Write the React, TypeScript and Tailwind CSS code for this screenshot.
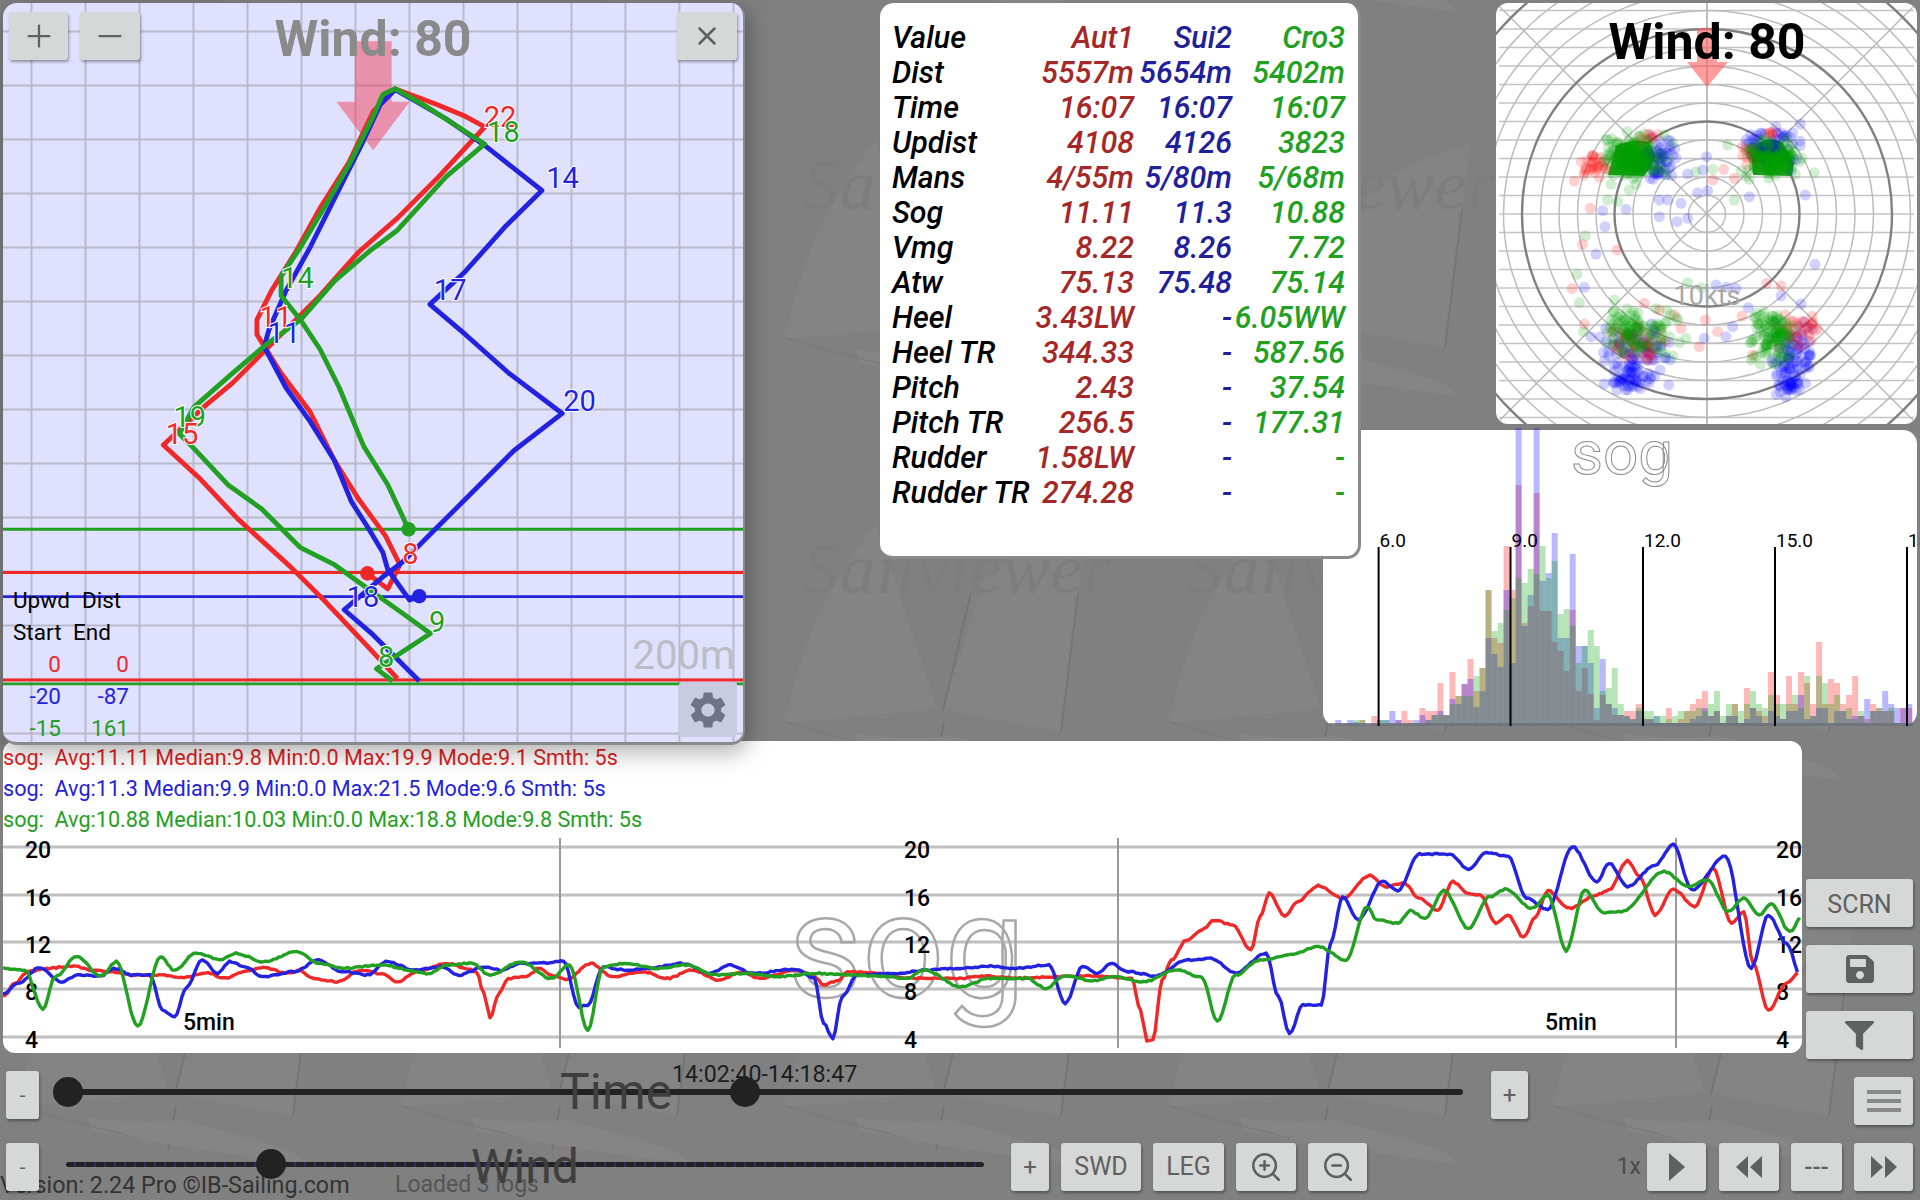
import type { ReactNode } from "react";
import { Minus, Plus, X, ZoomIn, ZoomOut } from "lucide-react";
import { FaFilter, FaSave } from "react-icons/fa";
import { MdSettings } from "react-icons/md";

const RED = "#f02828";
const BLUE = "#2222e0";
const GREEN = "#22a022";

let seed = 4711;
const rnd = () => {
  seed = (seed * 16807) % 2147483647;
  return seed / 2147483647;
};

const MAP_GRID = Array.from({ length: 14 }, (_, i) => 65 + i * 111.4);

const MAP_TRACKS = [
  {
    color: RED,
    y: [1181, 1403],
    dot: [758, 1183],
    pts: "758,1183 800,1215 825,1165 795,1105 740,1030 690,950 640,850 580,770 530,690 530,660 560,600 610,520 660,430 720,335 770,230 815,183 900,215 960,240 1000,262 900,370 820,450 740,520 660,610 545,725 480,790 420,840 337,918 410,985 490,1070 600,1170 670,1240 755,1330 820,1400",
  },
  {
    color: BLUE,
    y: [1231],
    dot: [865, 1230],
    pts: "865,1230 845,1238 800,1175 790,1140 760,1090 725,1035 690,950 640,870 590,800 545,715 555,680 590,600 640,510 700,390 750,290 785,215 815,185 860,210 920,245 1000,300 1118,393 1040,470 960,560 887,628 960,690 1050,770 1160,853 1060,930 960,1030 900,1090 830,1160 790,1190 710,1258 770,1310 820,1360 865,1405",
  },
  {
    color: GREEN,
    y: [1092, 1411],
    dot: [843, 1092],
    pts: "843,1092 800,1000 750,920 700,800 660,720 620,660 580,610 580,570 620,510 680,410 720,340 770,240 790,195 815,183 880,220 1000,297 920,365 820,475 760,520 690,580 620,660 550,710 480,770 400,840 370,895 400,925 470,1000 540,1050 620,1130 690,1165 760,1215 830,1265 888,1307 810,1358 777,1380 810,1405",
  },
];

const MAP_LABELS: [string, string, number, number][] = [
  ["22", RED, 998, 262],
  ["18", GREEN, 1005, 292],
  ["14", BLUE, 1127, 388],
  ["14", GREEN, 580, 595],
  ["17", BLUE, 895, 620],
  ["11", RED, 535, 675],
  ["11", BLUE, 552, 708],
  ["19", GREEN, 358, 882],
  ["15", RED, 342, 917],
  ["20", BLUE, 1162, 848],
  ["8", RED, 830, 1163],
  ["18", BLUE, 715, 1252],
  ["9", GREEN, 885, 1303],
  ["8", GREEN, 780, 1377],
];

const TABLE: [string, string, string, string][] = [
  ["Value", "Aut1", "Sui2", "Cro3"],
  ["Dist", "5557m", "5654m", "5402m"],
  ["Time", "16:07", "16:07", "16:07"],
  ["Updist", "4108", "4126", "3823"],
  ["Mans", "4/55m", "5/80m", "5/68m"],
  ["Sog", "11.11", "11.3", "10.88"],
  ["Vmg", "8.22", "8.26", "7.72"],
  ["Atw", "75.13", "75.48", "75.14"],
  ["Heel", "3.43LW", "-", "6.05WW"],
  ["Heel TR", "344.33", "-", "587.56"],
  ["Pitch", "2.43", "-", "37.54"],
  ["Pitch TR", "256.5", "-", "177.31"],
  ["Rudder", "1.58LW", "-", "-"],
  ["Rudder TR", "274.28", "-", "-"],
];

// r, g, b bar heights per 6px bin, read off the reference
const HIST = [
  [2,2,6],[3,1,2],[2,3,6],[2,6,4],[6,6,1],[1,1,2],[10,2,2],[2,6,6],[1,6,6],[2,2,15],[6,2,6],[15,2,2],
  [6,2,3],[2,3,6],[18,2,11],[15,6,6],[15,11,11],[43,11,15],[11,11,11],[54,22,27],[30,30,22],[42,30,42],
  [67,30,47],[35,50,19],[58,58,35],[136,136,88],[88,95,72],[83,103,59],[180,116,136],[136,128,63],
  [241,148,298],[103,143,100],[120,157,131],[233,152,298],[115,180,145],[115,148,153],[84,165,193],
  [75,112,88],[55,117,88],[116,100,172],[35,63,80],[58,80,80],[32,96,63],[6,80,18],[31,35,67],[22,38,22],
  [11,58,18],[11,22,11],[15,10,10],[15,7,7],[22,18,15],[7,15,7],[7,15,7],[3,10,10],[3,10,3],[18,7,3],
  [3,10,3],[7,15,3],[15,15,3],[22,15,7],[27,18,10],[35,15,18],[10,22,10],[15,35,15],[3,10,3],[10,22,10],
  [22,22,10],[3,15,3],[38,22,7],[18,35,18],[15,22,10],[10,18,3],[54,31,15],[31,22,10],[7,22,7],[50,22,15],
  [22,31,15],[54,18,31],[43,50,7],[22,10,10],[84,50,18],[22,43,18],[47,22,3],[43,31,15],[22,15,15],
  [31,18,7],[50,7,10],[10,15,10],[7,3,27],[22,15,15],[18,18,15],[15,15,35],[15,18,22],[3,3,18],[18,3,18],[18,3,22],
];

const HIST_TICKS: [string, number][] = [
  ["6.0", 1378.6],
  ["9.0", 1510.5],
  ["12.0", 1643],
  ["15.0", 1775],
  ["18.0", 1907],
];

type Dot = { x: number; y: number; c: string };

function cluster(c: string, cx: number, cy: number, sx: number, sy: number, n: number): Dot[] {
  return Array.from({ length: n }, () => ({
    x: cx + (rnd() + rnd() - 1) * sx,
    y: cy + (rnd() + rnd() - 1) * sy,
    c,
  }));
}

const scatter = (c: string, pts: number[][]): Dot[] => pts.map(([x, y]) => ({ x, y, c }));

const POLAR_DOTS: Dot[] = [
  ...cluster("#0000ff", 490, 480, 55, 85, 55),
  ...cluster("#0000ff", 830, 440, 100, 75, 75),
  ...cluster("#0000ff", 420, 1070, 125, 110, 90),
  ...cluster("#0000ff", 400, 1140, 60, 40, 40),
  ...cluster("#0000ff", 890, 1060, 70, 125, 80),
  ...cluster("#0000ff", 875, 1150, 50, 45, 30),
  ...scatter("#0000ff", [[632,470],[575,522],[620,510],[490,600],[515,600],[555,610],[605,578],[635,572],[390,628],[320,632],[490,650],[543,665],[575,655],[327,680],[300,763],[957,793],[265,862],[660,855],[692,862],[720,865],[855,888],[915,912],[757,923],[710,980],[625,1015],[690,1010],[760,590],[928,585],[285,1010]]),
  ...cluster("#ff0000", 290, 500, 55, 50, 26),
  ...cluster("#ff0000", 460, 415, 30, 20, 8),
  ...cluster("#ff0000", 420, 1030, 105, 70, 40),
  ...cluster("#ff0000", 900, 985, 70, 60, 32),
  ...cluster("#ff0000", 760, 470, 25, 45, 12),
  ...cluster("#ff0000", 825, 400, 20, 15, 5),
  ...scatter("#ff0000", [[283,625],[260,733],[363,750],[228,866],[265,972],[445,910],[490,930],[535,945],[555,985],[628,960],[665,995],[610,1040],[738,948],[812,850],[855,858],[770,1065],[650,540],[683,508],[715,535],[235,543]]),
  ...cluster("#00a000", 420, 470, 115, 85, 90),
  ...cluster("#00a000", 405, 475, 85, 55, 70),
  ...cluster("#00a000", 830, 480, 100, 75, 80),
  ...cluster("#00a000", 825, 475, 75, 50, 60),
  ...cluster("#00a000", 430, 1000, 130, 90, 110),
  ...cluster("#00a000", 830, 1010, 75, 100, 110),
  ...scatter("#00a000", [[650,508],[600,515],[530,430],[695,435],[955,518],[715,600],[760,538],[365,605],[335,600],[345,553],[400,570],[268,707],[243,823],[250,908],[355,900],[575,848],[617,863],[262,995],[570,1015],[545,960]]),
];

// smooth-ish trace with the small sensor noise the chart has
function jitter(points: number[][], xScale: number, xOff: number): string {
  const out: string[] = [];
  for (let i = 0; i < points.length - 1; i++) {
    const [x1, y1] = points[i];
    const [x2, y2] = points[i + 1];
    const rx1 = x1 / xScale + xOff;
    const rx2 = x2 / xScale + xOff;
    const steps = Math.max(1, Math.round((rx2 - rx1) / 2.5));
    for (let s = 0; s < steps; s++) {
      const t = s / steps;
      const e = t * t * (3 - 2 * t);
      const ry = 730 + (y1 + (y2 - y1) * e) / 3 + (rnd() - 0.5) * 1.4;
      out.push(`${(rx1 + (rx2 - rx1) * t).toFixed(1)},${ry.toFixed(1)}`);
    }
  }
  return out.join(" ");
}

const CHART_TRACES = [
  {
    color: RED,
    left: [[5,800],[25,760],[45,725],[80,715],[120,708],[150,720],[180,725],[220,735],[260,735],[300,742],[340,728],[365,745],[400,725],[430,712],[470,730],[490,722],[510,745],[550,755],[590,720],[620,730],[650,755],[680,725],[730,700],[760,715],[778,725],[790,790],[800,863],[815,790],[830,745],[860,740],[880,715],[900,735],[925,748],[965,700],[1000,740],[1050,725],[1090,745],[1130,720],[1175,750],[1210,725],[1240,745],[1300,720],[1330,740],[1345,765],[1370,750],[1385,725],[1430,730],[1480,745],[1530,745],[1568,745]],
    right: [[0,745],[40,738],[90,745],[130,742],[170,740],[220,738],[280,745],[295,840],[305,935],[315,930],[330,750],[345,690],[370,630],[395,600],[415,570],[445,585],[475,660],[490,560],[505,490],[530,560],[550,515],[585,467],[625,505],[670,435],[695,470],[725,460],[750,505],[780,540],[805,455],[830,490],[850,495],[875,580],[895,555],[920,622],[940,560],[960,482],[995,535],[1040,495],[1060,480],[1090,392],[1110,440],[1135,555],[1165,478],[1200,530],[1230,415],[1260,580],[1280,545],[1295,700],[1320,840],[1350,760],[1372,725]],
  },
  {
    color: BLUE,
    left: [[5,790],[30,760],[65,712],[100,755],[130,735],[165,738],[185,715],[215,735],[245,735],[265,840],[285,862],[305,770],[330,690],[355,730],[375,695],[400,710],[430,740],[480,725],[520,690],[560,725],[600,735],[630,695],[680,720],[720,710],[750,735],[790,710],[820,720],[850,700],[880,700],[920,692],[945,830],[960,825],[985,710],[1020,720],[1060,715],[1115,700],[1160,730],[1190,705],[1230,730],[1300,718],[1330,745],[1345,880],[1360,925],[1375,800],[1400,735],[1470,730],[1510,720],[1568,715]],
    right: [[0,715],[50,708],[90,715],[145,705],[172,820],[200,710],[225,730],[245,700],[275,725],[320,738],[370,690],[410,685],[450,728],[500,670],[520,800],[538,912],[560,825],[590,825],[605,640],[625,500],[650,570],[690,455],[715,482],[750,372],[800,372],[830,418],[860,368],[895,378],[925,505],[960,538],[1000,350],[1040,455],[1060,400],[1090,470],[1135,405],[1165,342],[1195,480],[1250,378],[1292,715],[1320,555],[1350,640],[1372,735]],
  },
  {
    color: GREEN,
    left: [[5,715],[40,720],[70,838],[90,740],[125,680],[165,738],[190,695],[225,890],[262,680],[285,722],[320,668],[360,690],[385,670],[430,695],[485,665],[520,700],[560,715],[620,705],[700,730],[730,705],[770,700],[800,735],[850,695],[900,745],[930,705],[960,900],[985,710],[1020,700],[1070,715],[1120,705],[1170,735],[1220,730],[1270,740],[1330,730],[1390,735],[1430,738],[1480,745],[1510,720],[1568,770]],
    right: [[0,770],[50,745],[110,745],[140,775],[170,738],[220,752],[250,738],[300,755],[355,720],[395,742],[420,875],[450,735],[490,690],[540,675],[585,650],[630,690],[665,530],[680,570],[715,580],[735,542],[760,565],[790,482],[830,595],[865,500],[890,478],[935,535],[960,495],[990,662],[1020,480],[1050,548],[1080,545],[1150,425],[1190,470],[1220,450],[1255,545],[1280,505],[1305,555],[1325,520],[1355,605],[1375,560]],
  },
].map((t) => ({
  color: t.color,
  pts: `${jitter(t.left, 1.633, 0)} ${jitter(t.right, 1.633, 960)}`,
}));

const AXIS: [string, number, number][] = [
  ["20", 847, 858],
  ["16", 895, 906],
  ["12", 942, 953],
  ["8", 989, 1000],
  ["4", 1037, 1048],
];

function Btn({ className, children }: { className: string; children: ReactNode }) {
  return (
    <div
      className={`flex items-center justify-center rounded-[3px] bg-[#d6d7d7] text-[#5f6060] shadow-[1px_2px_3px_rgba(0,0,0,0.35)] ${className}`}
    >
      {children}
    </div>
  );
}

function Backdrop() {
  return (
    <svg className="absolute inset-0 h-full w-full" aria-hidden="true">
      <defs>
        <pattern id="tile" patternUnits="userSpaceOnUse" x="18" y="100" width="384" height="384">
          <path d="M90 40 Q18 130 0 238 Q90 232 151 224 Z" fill="#848484" />
          <path d="M157 226 L200 90 Q250 55 300 45 L275 247 Z" fill="#848484" />
          <path d="M185 109 L157 226 M292 109 L275 247 M158 238 L150 282" stroke="#747474" strokeWidth="2" fill="none" />
          <path d="M73 262 Q160 280 290 296 L272 282 L165 252 Q120 256 70 250 Z" fill="#858585" />
          <path d="M0 238 Q60 256 120 270" stroke="#777777" strokeWidth="1" fill="none" />
          <text x="17" y="109" fontFamily="'Liberation Serif', serif" fontStyle="italic" fontSize="72" textLength="308" fill="#7d7d7d">
            Sailviewer
          </text>
        </pattern>
      </defs>
      <rect width="100%" height="100%" fill="url(#tile)" />
    </svg>
  );
}

function MapPanel() {
  return (
    <div className="relative z-20 h-[742px] w-[742px] shrink-0 overflow-hidden rounded-[14px] border-r-[2px] border-b-[3px] border-[#8a8a8a] bg-[#e0e0ff] shadow-[2px_6px_24px_rgba(0,0,0,0.35)]">
      <svg className="absolute top-[-3px] left-[-3px] h-[760px] w-[760px]" viewBox="0 0 1568 1568">
        {MAP_GRID.map((p) => (
          <g key={p} stroke="#b9b9c9" strokeWidth="4">
            <line x1={p} y1="0" x2={p} y2="1568" />
            <line x1="0" y1={p} x2="1568" y2={p} />
          </g>
        ))}
        <path d="M732 85 H808 V210 H845 L770 310 L694 210 H732 Z" fill="#f0405a" fillOpacity="0.5" />
        {MAP_TRACKS.map((t) =>
          t.y.map((y) => <line key={`${t.color}${y}`} x1="0" y1={y} x2="1568" y2={y} stroke={t.color} strokeWidth="6" />),
        )}
        {MAP_TRACKS.map((t) => (
          <g key={t.color}>
            <polyline points={t.pts} fill="none" stroke={t.color} strokeWidth="10" strokeLinejoin="round" />
            <circle cx={t.dot[0]} cy={t.dot[1]} r="15" fill={t.color} />
          </g>
        ))}
        {MAP_LABELS.map(([s, c, x, y]) => (
          <text key={`${s}${c}`} x={x} y={y} fill={c} stroke="#ffffff" strokeWidth="4" paintOrder="stroke" fontSize="60" fontFamily="Roboto, sans-serif">
            {s}
          </text>
        ))}
      </svg>

      <div className="relative grid grid-cols-[1fr_auto_1fr] px-[6px] pt-[9px]">
        <div className="flex gap-[12px]">
          <Btn className="h-[48px] w-[59px]">
            <Plus size={36} strokeWidth={1.5} />
          </Btn>
          <Btn className="h-[48px] w-[60px]">
            <Minus size={36} strokeWidth={1.5} />
          </Btn>
        </div>
        <div className="text-[50px] leading-[54px] font-bold text-[#8a8a8a]">Wind: 80</div>
        <div className="flex justify-end">
          <Btn className="h-[48px] w-[60px]">
            <X size={30} strokeWidth={2} />
          </Btn>
        </div>
      </div>

      <div className="absolute top-[581px] left-[10px] grid w-[120px] grid-cols-[48px_68px] text-[22.5px] leading-[32px] whitespace-nowrap text-black">
        <div>Upwd</div>
        <div className="pl-[21px]">Dist</div>
        <div>Start</div>
        <div className="pl-[12px]">End</div>
        <div className="text-right text-[#f02828]">0</div>
        <div className="text-right text-[#f02828]">0</div>
        <div className="text-right text-[#2222e0]">-20</div>
        <div className="text-right text-[#2222e0]">-87</div>
        <div className="text-right text-[#22a022]">-15</div>
        <div className="text-right text-[#22a022]">161</div>
      </div>
      <div className="absolute top-[628px] right-[8px] text-[40px] leading-[50px] text-[#bcbcc4]">200m</div>
      <div className="absolute top-[679px] right-[6px] flex h-[55px] w-[58px] items-center justify-center rounded-[3px] bg-[#c9cbe0] text-[#6e7488]">
        <MdSettings size={44} />
      </div>
    </div>
  );
}

function StatsTable() {
  const cols = ["text-[#a52828]", "text-[#20209a]", "text-[#22a022]"];
  return (
    <div className="relative z-10 ml-[135px] h-[556px] w-[481px] shrink-0 rounded-[14px] border-r-[3px] border-b-[3px] border-[#8a8a8a] bg-white pt-[17px] pl-[12px]">
      <div className="grid grid-cols-[140px_102px_98px_113px] text-[30.4px] leading-[35px] font-medium whitespace-nowrap italic">
        {TABLE.map((row) => (
          <div key={row[0]} className="contents">
            <div className="text-black">{row[0]}</div>
            {cols.map((c, i) => (
              <div key={c} className={`text-right ${c}`}>
                {row[i + 1]}
              </div>
            ))}
          </div>
        ))}
      </div>
    </div>
  );
}

function PolarPanel() {
  const circles = Array.from({ length: 16 }, (_, i) => (i + 1) * 18.5);
  const rows = Array.from({ length: 23 }, (_, i) => 211 + (i - 11) * 18.5);
  return (
    <div className="h-[421px] w-[421px] overflow-hidden rounded-[12px] bg-white">
      <svg className="block h-full w-full" viewBox="0 0 421 421">
        {rows.map((y) => (
          <line key={y} x1="3" y1={y} x2="418" y2={y} stroke="#c4c4c4" strokeWidth="1.6" />
        ))}
        <line x1="211" y1="0" x2="211" y2="421" stroke="#b0b0b0" strokeWidth="1.6" />
        <line x1="0" y1="0" x2="421" y2="421" stroke="#b8b8b8" strokeWidth="1.4" />
        <line x1="421" y1="0" x2="0" y2="421" stroke="#b8b8b8" strokeWidth="1.4" />
        {circles.map((r, i) => (
          <circle
            key={r}
            cx="211"
            cy="211"
            r={r}
            fill="none"
            stroke={(i + 1) % 5 === 0 ? "#808080" : "#bcbcbc"}
            strokeWidth={(i + 1) % 5 === 0 ? 2.4 : 1.5}
          />
        ))}
        <path d="M201 25 H221 V59 H232 L211 84 L191 59 H201 Z" fill="#ff5a5a" fillOpacity="0.6" />
        <path d="M112 172 L120 143 Q133 135 153 139 L160 154 L148 173 Z" fill="#22a022" />
        <path d="M256 157 L263 140 Q277 133 287 140 L298 160 L296 173 L257 172 Z" fill="#22a022" />
        {POLAR_DOTS.map((d, i) => (
          <circle key={i} cx={d.x / 3} cy={d.y / 3 - 3} r="5.5" fill={d.c} fillOpacity="0.18" />
        ))}
        <text x="211" y="302" textAnchor="middle" fontSize="27" fill="#a8a8a8" fontFamily="Roboto, sans-serif">
          10kts
        </text>
        <text x="211" y="56" textAnchor="middle" fontSize="50" fontWeight="700" fill="#000" fontFamily="Roboto, sans-serif">
          Wind: 80
        </text>
      </svg>
    </div>
  );
}

function HistogramPanel() {
  return (
    <div className="mt-[6px] h-[296px] w-[594px] rounded-[14px] bg-white">
      <svg className="block h-full w-full overflow-visible" viewBox="1323 431 594 296">
        {HIST.map(([r, g, b], i) => {
          const x = 1335.3 + i * 6.01;
          return (
            <g key={i}>
              <rect x={x} y={727 - r} width="6" height={r} fill="#ff0000" fillOpacity="0.28" />
              <rect x={x} y={727 - b} width="6" height={b} fill="#0000ff" fillOpacity="0.28" />
              <rect x={x} y={727 - g} width="6" height={g} fill="#00a000" fillOpacity="0.28" />
            </g>
          );
        })}
        <rect x="1329" y="724" width="584" height="3" fill="#6a7078" fillOpacity="0.8" />
        {HIST_TICKS.map(([label, x]) => (
          <g key={label}>
            <line x1={x} y1="548" x2={x} y2="727" stroke="#000" strokeWidth="2" />
            <text x={x + 1} y="548" fontSize="19" fill="#000" fontFamily="Roboto, sans-serif">
              {label}
            </text>
          </g>
        ))}
        <text x="1571" y="475" fontSize="62" fill="none" stroke="#8a8a8a" strokeWidth="1" fontFamily="Roboto, sans-serif">
          sog
        </text>
      </svg>
    </div>
  );
}

function ChartPanel() {
  return (
    <div className="h-[312px] w-[1799px] shrink-0 overflow-hidden rounded-[12px] bg-white">
      <div className="pt-[1px] text-[21.6px] leading-[31px] whitespace-pre">
        <div className="text-[#e02222]">sog:  Avg:11.11 Median:9.8 Min:0.0 Max:19.9 Mode:9.1 Smth: 5s</div>
        <div className="text-[#2222dd]">sog:  Avg:11.3 Median:9.9 Min:0.0 Max:21.5 Mode:9.6 Smth: 5s</div>
        <div className="text-[#22a022]">sog:  Avg:10.88 Median:10.03 Min:0.0 Max:18.8 Mode:9.8 Smth: 5s</div>
      </div>
      <svg className="block h-[218px] w-[1799px]" viewBox="3 835 1799 218">
        {AXIS.map(([, y]) => (
          <line key={y} x1="3" y1={y} x2="1802" y2={y} stroke="#c0c0c0" strokeWidth="3" />
        ))}
        {[560, 1118, 1676].map((x) => (
          <line key={x} x1={x} y1="838" x2={x} y2="1048" stroke="#999999" strokeWidth="2" />
        ))}
        <text x="788" y="997" fontSize="144" fill="none" stroke="#a8a8a8" strokeWidth="2.5" fontFamily="Roboto, sans-serif">
          sog
        </text>
        {AXIS.map(([label, , base]) =>
          [25, 904, 1776].map((x) => (
            <text key={`${label}${x}`} x={x} y={base} fontSize="23" fontWeight="500" fill="#000" fontFamily="Roboto, sans-serif">
              {label}
            </text>
          )),
        )}
        {[183, 1545].map((x) => (
          <text key={x} x={x} y="1030" fontSize="23" fontWeight="500" fill="#000" fontFamily="Roboto, sans-serif">
            5min
          </text>
        ))}
        {CHART_TRACES.map((t) => (
          <polyline key={t.color} points={t.pts} fill="none" stroke={t.color} strokeWidth="3.4" strokeLinejoin="round" />
        ))}
      </svg>
    </div>
  );
}

function Thumb({ x }: { x: number }) {
  return <div style={{ left: x - 15 }} className="absolute top-[6px] h-[30px] w-[30px] rounded-full bg-[#222222]" />;
}

export default function App() {
  return (
    <div className="relative flex h-[1200px] w-[1920px] flex-col overflow-hidden bg-[#808080] font-[Roboto,sans-serif]">
      <Backdrop />

      <div className="relative z-20 flex h-[741px] items-start pt-[3px] pl-[3px]">
        <MapPanel />
        <StatsTable />
        <div className="ml-[-38px] flex w-[594px] shrink-0 flex-col items-end">
          <PolarPanel />
          <HistogramPanel />
        </div>
      </div>

      <div className="relative z-10 flex h-[312px] items-start pl-[3px]">
        <ChartPanel />
        <div className="mt-[138px] ml-[4px] flex w-[107px] flex-col gap-[18px]">
          <Btn className="h-[48px] pt-[3px] text-[25px]">SCRN</Btn>
          <Btn className="h-[48px]">
            <FaSave size={32} />
          </Btn>
          <Btn className="h-[48px]">
            <FaFilter size={29} />
          </Btn>
        </div>
      </div>

      <div className="relative z-10 flex h-[72px] items-start pt-[18px] pl-[6px]">
        <Btn className="h-[48px] w-[33px] text-[20px]">-</Btn>
        <div className="relative ml-[29px] flex h-[42px] w-[1395px] items-center">
          <div className="absolute top-[-1px] left-[492px] text-[50px] leading-[44px] text-[#3f3f3f]">Time</div>
          <div className="absolute top-[-10px] left-[604px] text-[23.2px] leading-[26px] whitespace-nowrap text-[#1d1d1d]">
            14:02:40-14:18:47
          </div>
          <div className="h-[6px] w-full rounded-full bg-[#222222]" />
          <Thumb x={0} />
          <Thumb x={677} />
        </div>
        <Btn className="ml-[28px] h-[48px] w-[37px] text-[24px]">+</Btn>
        <Btn className="mt-[6px] mr-[7px] ml-auto h-[48px] w-[59px]">
          <div className="flex w-[34px] flex-col gap-[5px]">
            <div className="h-[4px] bg-[#8a8a8a]" />
            <div className="h-[4px] bg-[#8a8a8a]" />
            <div className="h-[4px] bg-[#8a8a8a]" />
          </div>
        </Btn>
      </div>

      <div className="relative z-10 flex h-[75px] items-start pt-[18px] pl-[6px]">
        <div className="absolute top-[47px] left-0 text-[23.3px] leading-[26px] whitespace-nowrap text-[#333333]">
          Version: 2.24 Pro ©IB-Sailing.com
        </div>
        <div className="absolute top-[47px] left-[395px] text-[23px] leading-[26px] whitespace-nowrap text-[#555555]">
          Loaded 3 logs
        </div>
        <Btn className="relative h-[48px] w-[33px] text-[20px]">-</Btn>
        <div className="relative ml-[27px] flex h-[42px] w-[918px] items-center">
          <div className="absolute top-[2px] left-[405px] text-[48px] leading-[44px] text-[#3f3f3f]">Wind</div>
          <div className="h-[5px] w-full rounded-full bg-[repeating-linear-gradient(90deg,#222222_0,#222222_8px,#34286a_8px,#34286a_10px)]" />
          <Thumb x={205} />
        </div>
        <Btn className="ml-[27px] h-[48px] w-[38px] text-[24px]">+</Btn>
        <Btn className="ml-[12px] h-[48px] w-[80px] text-[25px]">SWD</Btn>
        <Btn className="ml-[12px] h-[48px] w-[71px] text-[25px]">LEG</Btn>
        <Btn className="ml-[12px] h-[48px] w-[60px]">
          <ZoomIn size={34} strokeWidth={1.8} />
        </Btn>
        <Btn className="ml-[12px] h-[48px] w-[59px]">
          <ZoomOut size={34} strokeWidth={1.8} />
        </Btn>
        <div className="mt-[8px] ml-auto text-[23px] leading-[32px] text-[#4a4a4a]">1x</div>
        <Btn className="ml-[6px] h-[48px] w-[59px]">
          <svg width="18" height="28" viewBox="0 0 18 28" fill="currentColor">
            <path d="M1 0 L17 14 L1 28 Z" />
          </svg>
        </Btn>
        <Btn className="ml-[13px] h-[48px] w-[60px]">
          <svg width="26" height="22" viewBox="0 0 26 22" fill="currentColor">
            <path d="M12 0 V22 L0 11 Z M26 0 V22 L14 11 Z" />
          </svg>
        </Btn>
        <Btn className="ml-[12px] h-[48px] w-[51px] text-[24px] font-medium">---</Btn>
        <Btn className="mr-[7px] ml-[12px] h-[48px] w-[59px]">
          <svg width="26" height="22" viewBox="0 0 26 22" fill="currentColor">
            <path d="M0 0 V22 L12 11 Z M14 0 V22 L26 11 Z" />
          </svg>
        </Btn>
      </div>
    </div>
  );
}
